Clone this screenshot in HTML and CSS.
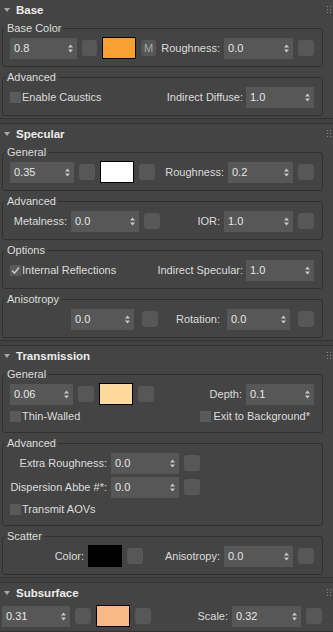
FILE: index.html
```html
<!DOCTYPE html>
<html lang="en">
<head>
  <meta charset="UTF-8" />
  <title>Material Parameters</title>
  <link rel="stylesheet" href="styles.css">
</head>
<body>
  <svg width="0" height="0" class="defs">
    <symbol id="arr" viewBox="0 0 5 9"><path d="M0 3.5 L2.5 0.5 L5 3.5 Z M0 5.5 L2.5 8.5 L5 5.5 Z" fill="#c8c8c8"/></symbol>
    <symbol id="grip" viewBox="0 0 5 7"><path d="M0 0h1v1h-1z M3 0h1v1h-1z M0 3h1v1h-1z M3 3h1v1h-1z M0 6h1v1h-1z M3 6h1v1h-1z" fill="#8a8a8a"/></symbol>
    <symbol id="tri" viewBox="0 0 6 4"><path d="M0 0 L6 0 L3 4 Z" fill="#a8a8a8"/></symbol>
    <symbol id="tick" viewBox="0 0 11 11"><path d="M2 5.5 L4.5 8 L9 2.5" stroke="#c4c4c4" stroke-width="1.6" fill="none"/></symbol>
  </svg>

  <!-- Base -->
  <section class="rollout">
    <div class="roll-head">
      <svg class="tri"><use href="#tri"/></svg>
      <span class="roll-title">Base</span>
      <svg class="grip"><use href="#grip"/></svg>
    </div>
    <div class="roll-body">
      <fieldset class="grp">
        <legend>Base Color</legend>
        <div class="row">
          <div class="spin">0.8<svg class="arr"><use href="#arr"/></svg></div>
          <span class="btn"></span>
          <span class="swatch sw-orange"></span>
          <span class="btn">M</span>
          <div class="right">
            <span class="lbl">Roughness:</span>
            <div class="spin s69">0.0<svg class="arr"><use href="#arr"/></svg></div>
            <span class="btn"></span>
          </div>
        </div>
      </fieldset>
      <fieldset class="grp">
        <legend>Advanced</legend>
        <div class="row chkrow">
          <span class="cb"></span><span>Enable Caustics</span>
          <div class="right">
            <span class="lbl">Indirect Diffuse:</span>
            <div class="spin">1.0<svg class="arr"><use href="#arr"/></svg></div>
          </div>
        </div>
      </fieldset>
    </div>
  </section>

  <!-- Specular -->
  <section class="rollout">
    <div class="roll-head">
      <svg class="tri"><use href="#tri"/></svg>
      <span class="roll-title">Specular</span>
      <svg class="grip"><use href="#grip"/></svg>
    </div>
    <div class="roll-body">
      <fieldset class="grp">
        <legend>General</legend>
        <div class="row">
          <div class="spin s64">0.35<svg class="arr"><use href="#arr"/></svg></div>
          <span class="btn"></span>
          <span class="swatch sw-white"></span>
          <span class="btn"></span>
          <div class="right">
            <span class="lbl">Roughness:</span>
            <div class="spin s65">0.2<svg class="arr"><use href="#arr"/></svg></div>
            <span class="btn"></span>
          </div>
        </div>
      </fieldset>
      <fieldset class="grp">
        <legend>Advanced</legend>
        <div class="row">
          <span class="lcol lc57">Metalness:</span>
          <div class="spin">0.0<svg class="arr"><use href="#arr"/></svg></div>
          <span class="btn"></span>
          <div class="right">
            <span class="lbl">IOR:</span>
            <div class="spin s69">1.0<svg class="arr"><use href="#arr"/></svg></div>
            <span class="btn"></span>
          </div>
        </div>
      </fieldset>
      <fieldset class="grp">
        <legend>Options</legend>
        <div class="row chkrow">
          <span class="cb"><svg><use href="#tick"/></svg></span><span>Internal Reflections</span>
          <div class="right">
            <span class="lbl">Indirect Specular:</span>
            <div class="spin">1.0<svg class="arr"><use href="#arr"/></svg></div>
          </div>
        </div>
      </fieldset>
      <fieldset class="grp">
        <legend>Anisotropy</legend>
        <div class="row wide">
          <div class="spin s63 indent">0.0<svg class="arr"><use href="#arr"/></svg></div>
          <span class="btn"></span>
          <div class="right">
            <span class="lbl">Rotation:</span>
            <div class="spin s63">0.0<svg class="arr"><use href="#arr"/></svg></div>
            <span class="btn"></span>
          </div>
        </div>
      </fieldset>
    </div>
  </section>

  <!-- Transmission -->
  <section class="rollout">
    <div class="roll-head">
      <svg class="tri"><use href="#tri"/></svg>
      <span class="roll-title">Transmission</span>
      <svg class="grip"><use href="#grip"/></svg>
    </div>
    <div class="roll-body">
      <fieldset class="grp">
        <legend>General</legend>
        <div class="rows">
          <div class="row">
            <div class="spin s63">0.06<svg class="arr"><use href="#arr"/></svg></div>
            <span class="btn"></span>
            <span class="swatch sw-cream"></span>
            <span class="btn"></span>
            <div class="right">
              <span class="lbl">Depth:</span>
              <div class="spin">0.1<svg class="arr"><use href="#arr"/></svg></div>
            </div>
          </div>
          <div class="row chkrow short">
            <span class="cb"></span><span>Thin-Walled</span>
            <div class="right pad4">
              <span class="cb"></span><span>Exit to Background*</span>
            </div>
          </div>
        </div>
      </fieldset>
      <fieldset class="grp">
        <legend>Advanced</legend>
        <div class="rows">
          <div class="row">
            <span class="lcol lc97">Extra Roughness:</span>
            <div class="spin">0.0<svg class="arr"><use href="#arr"/></svg></div>
            <span class="btn"></span>
          </div>
          <div class="row">
            <span class="lcol lc97">Dispersion Abbe #*:</span>
            <div class="spin">0.0<svg class="arr"><use href="#arr"/></svg></div>
            <span class="btn"></span>
          </div>
          <div class="row chkrow short">
            <span class="cb"></span><span>Transmit AOVs</span>
          </div>
        </div>
      </fieldset>
      <fieldset class="grp">
        <legend>Scatter</legend>
        <div class="row">
          <span class="lcol lc74">Color:</span>
          <span class="swatch sw-black"></span>
          <span class="btn"></span>
          <div class="right">
            <span class="lbl">Anisotropy:</span>
            <div class="spin s69">0.0<svg class="arr"><use href="#arr"/></svg></div>
            <span class="btn"></span>
          </div>
        </div>
      </fieldset>
    </div>
  </section>

  <!-- Subsurface -->
  <section class="rollout">
    <div class="roll-head">
      <svg class="tri"><use href="#tri"/></svg>
      <span class="roll-title">Subsurface</span>
      <svg class="grip"><use href="#grip"/></svg>
    </div>
    <div class="roll-body flat">
      <div class="row">
        <div class="spin">0.31<svg class="arr"><use href="#arr"/></svg></div>
        <span class="btn"></span>
        <span class="swatch sw-peach"></span>
        <span class="btn"></span>
        <div class="right">
          <span class="lbl">Scale:</span>
          <div class="spin s69">0.32<svg class="arr"><use href="#arr"/></svg></div>
          <span class="btn"></span>
        </div>
      </div>
    </div>
  </section>
</body>
</html>
```

FILE: styles.css
```css
body {
  margin: 0;
  width: 333px;
  background: #404040;
  font-family: "Liberation Sans", Arial, sans-serif;
  font-size: 11px;
  color: #dcdcdc;
}

.defs {
  position: absolute;
}

.rollout {
  background: #444444;
  border-bottom: 1px solid #333333;
  margin-bottom: 4px;
}

.rollout + .rollout .roll-head {
  border-top: 1px solid #333333;
}

.roll-head {
  height: 19px;
  display: flex;
  align-items: center;
  padding-left: 4px;
}

.tri {
  width: 6px;
  height: 4px;
  margin-right: 6px;
}

.roll-title {
  font-weight: bold;
  font-size: 11.5px;
  color: #ececec;
}

.grip {
  width: 5px;
  height: 7px;
  margin-left: auto;
  margin-right: 1px;
}

.roll-body {
  display: flex;
  flex-direction: column;
  gap: 3px;
  padding: 2px 10px 2px 2px;
}

.roll-body.flat {
  padding: 3px 11px 4px 2px;
}

/* group boxes */
.grp {
  margin: 0;
  min-width: 0;
  padding: 2px 8px 7px 7px;
  border: 1px solid #303030;
  border-radius: 3px;
}

.grp legend {
  padding: 0 2px;
  margin-left: -5px;
  line-height: 14px;
  color: #dcdcdc;
}

.rows {
  display: flex;
  flex-direction: column;
  gap: 2px;
}

.row {
  display: flex;
  align-items: center;
  gap: 5px;
  height: 22px;
  white-space: nowrap;
}

.row.wide,
.row.wide .right {
  gap: 8px;
}

.row.chkrow {
  gap: 1px;
}

.row.short {
  height: 18px;
}

.right {
  margin-left: auto;
  display: flex;
  align-items: center;
  gap: 5px;
}

.chkrow .right {
  gap: 4px;
}

.right.pad4 {
  gap: 2px;
  padding-right: 4px;
}

.lbl {
  margin-right: -1px;
}

.lcol {
  display: flex;
  justify-content: flex-end;
  margin-right: -1px;
}

.lc57 { width: 57px; }
.lc74 { width: 74px; }
.lc97 { width: 97px; }

/* spinners */
.spin {
  width: 68px;
  height: 21px;
  box-sizing: border-box;
  padding: 0 4px 0 4px;
  background: #575757;
  color: #e6e6e6;
  display: flex;
  align-items: center;
  justify-content: space-between;
}

.spin.s63 { width: 63px; }
.spin.s64 { width: 64px; }
.spin.s65 { width: 65px; }
.spin.s69 { width: 69px; }

.spin.indent {
  margin-left: 61px;
}

.arr {
  width: 5px;
  height: 9px;
}

.btn {
  width: 16px;
  height: 16px;
  box-sizing: border-box;
  border-radius: 3px;
  background: #575757;
  color: #a8a8a8;
  font-size: 11px;
  display: flex;
  align-items: center;
  justify-content: center;
}

.swatch {
  width: 34px;
  height: 22px;
  box-sizing: border-box;
  border: 1px solid #000;
}

.sw-orange { background: #f9a033; }
.sw-white { background: #ffffff; }
.sw-cream { background: #ffd89c; }
.sw-black { background: #000000; }
.sw-peach { background: #f9b888; }

.cb {
  width: 11px;
  height: 11px;
  background: #5a5a5a;
  display: flex;
}

.cb svg {
  width: 11px;
  height: 11px;
}
```
